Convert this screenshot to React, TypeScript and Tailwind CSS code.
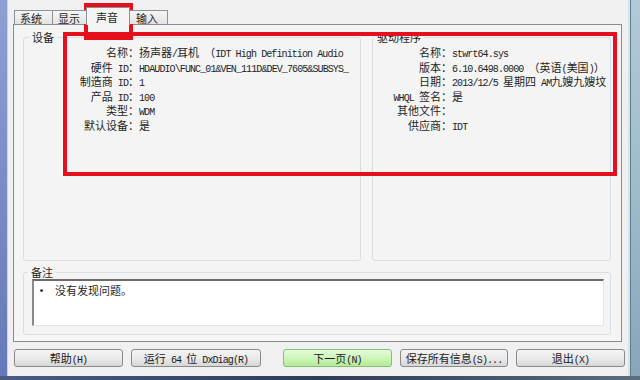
import React from "react";

const cjk = "font-['Noto_Sans_CJK_SC','Liberation_Sans',sans-serif]";

// Latin runs look like SimSun's half-width glyphs: narrow mono
function T({ s }: { s: string }) {
  const parts = s.split(/([\x20-\x7e]+)/);
  return (
    <>
      {parts.map((p, i) =>
        /^[\x20-\x7e]+$/.test(p) ? (
          <span key={i} className="font-['Liberation_Mono',monospace] text-[10px] tracking-[-0.9px]">
            {p}
          </span>
        ) : (
          <span key={i}>{p}</span>
        )
      )}
    </>
  );
}

const device = [
  ["名称：", "扬声器/耳机 （IDT High Definition Audio"],
  ["硬件 ID：", "HDAUDIO\\FUNC_01&VEN_111D&DEV_7605&SUBSYS_"],
  ["制造商 ID：", "1"],
  ["产品 ID：", "100"],
  ["类型：", "WDM"],
  ["默认设备：", "是"],
];

const driver = [
  ["名称：", "stwrt64.sys"],
  ["版本：", "6.10.6498.0000 （英语(美国)）"],
  ["日期：", "2013/12/5 星期四 AM九嫂九嫂坟"],
  ["WHQL 签名：", "是"],
  ["其他文件：", ""],
  ["供应商：", "IDT"],
];

function Rows({ rows, labelW }: { rows: string[][]; labelW: string }) {
  return (
    <div className="flex flex-col pt-[1px]">
      {rows.map(([k, v]) => (
        <div key={k} className="flex leading-[14.6px] h-[14.6px] whitespace-nowrap">
          <div className={`${labelW} shrink-0 text-right`}>
            <T s={k} />
          </div>
          <div className="flex-1 overflow-hidden">
            <T s={v} />
          </div>
        </div>
      ))}
    </div>
  );
}

function Btn({ label, w, green }: { label: string; w: string; green?: boolean }) {
  return (
    <button
      className={`${w} h-[18px] rounded-[3px] border text-[11px] leading-[16px] text-[#1b1b1b] ${
        green
          ? "border-[#86bd7a] bg-gradient-to-b from-[#e6fbdb] via-[#cdf5b8] to-[#b3eb96]"
          : "border-[#8a8a8a] bg-gradient-to-b from-[#f4f4f4] via-[#eaeaea] to-[#d7d7d7]"
      }`}
    >
      <T s={label} />
    </button>
  );
}

export default function App() {
  return (
    <div className={`w-[640px] h-[380px] relative overflow-hidden flex flex-col text-[11px] text-[#1e1e1e] ${cjk}`}>
      <div className="flex flex-1">
        <div className="w-[8px] bg-gradient-to-b from-[#8e9fd3] via-[#7a8cc8] to-[#6579b8] border-r border-[#c9d2ea]" />

        <div className="w-[620px] bg-[#f0f0f0] flex flex-col pt-[7px]">
          {/* tabs */}
          <div className="flex h-[17px] pl-[6px] relative z-10">
            <div className="w-[39px] h-[14px] mt-[3px] pl-[5px] leading-[14px] border border-b-0 border-[#8e9099] bg-gradient-to-b from-[#f6f6f6] to-[#e2e2e2]">
              系统
            </div>
            <div className="w-[35px] h-[14px] mt-[3px] pl-[5px] leading-[14px] border border-l-0 border-b-0 border-[#8e9099] bg-gradient-to-b from-[#f6f6f6] to-[#e2e2e2]">
              显示
            </div>
            <div className="w-[44px] h-[18px] -ml-[2px] pl-[9px] pt-[2px] leading-[14px] border border-b-0 border-[#8e9099] bg-[#f4f4f4]">
              声音
            </div>
            <div className="w-[38px] h-[14px] mt-[3px] pl-[6px] leading-[14px] border border-l-0 border-b-0 border-[#8e9099] bg-gradient-to-b from-[#f6f6f6] to-[#e2e2e2]">
              输入
            </div>
          </div>

          {/* tab panel */}
          <div className="ml-[5px] mr-[6px] h-[318px] border border-[#898c95] bg-[#f4f4f4] pl-[9px] pr-[10px] pt-[5px]">
            <div className="flex gap-[11px]">
              <fieldset className="w-[338px] h-[231px] border border-[#d5dfe5] rounded-[3px] pr-[10px]">
                <legend className="ml-[5px] px-[3px] leading-[14px]">设备</legend>
                <Rows rows={device} labelW="w-[115px]" />
              </fieldset>
              <fieldset className="w-[239px] h-[231px] border border-[#d5dfe5] rounded-[3px]">
                <legend className="ml-[1px] px-[3px] leading-[14px]">驱动程序</legend>
                <Rows rows={driver} labelW="w-[79px]" />
              </fieldset>
            </div>

            <fieldset className="mt-[4px] h-[70px] border border-[#d5dfe5] rounded-[3px] pl-[8px] pr-[6px]">
              <legend className="-ml-[4px] px-[3px] leading-[14px]">备注</legend>
              <div className="h-[47px] bg-white border-t-2 border-l-2 border-t-[#6b6b6b] border-l-[#8a8a8a] border-r border-b border-r-[#e6e6e6] border-b-[#e6e6e6] flex pl-[2px] pt-[2px] leading-[14px]">
                <span className="w-[19px] font-bold">•</span>
                <span>没有发现问题。</span>
              </div>
            </fieldset>
          </div>

          {/* buttons */}
          <div className="flex pl-[6px] mt-[7px]">
            <Btn label="帮助(H)" w="w-[109px]" />
            <div className="ml-[8px]">
              <Btn label="运行 64 位 DxDiag(R)" w="w-[130px]" />
            </div>
            <div className="ml-[22px]">
              <Btn label="下一页(N)" w="w-[109px]" green />
            </div>
            <div className="ml-[8px]">
              <Btn label="保存所有信息(S)..." w="w-[108px]" />
            </div>
            <div className="ml-[8px]">
              <Btn label="退出(X)" w="w-[109px]" />
            </div>
          </div>
        </div>

        <div className="flex-1 flex">
          <div className="w-[2px] bg-[#d9e3ea]" />
          <div className="w-[1px] bg-[#5f7d91]" />
          <div className="flex-1 bg-gradient-to-b from-[#b2c9d6] via-[#9fbccb] to-[#87a6b8]" />
        </div>
      </div>
      <div className="h-[4px] bg-gradient-to-r from-[#4a5c86] via-[#2f3c55] to-[#5c6d7e]" />

      {/* red annotation boxes */}
      <div className="absolute left-[84px] top-[3px] w-[49px] h-[37px] border-[4px] border-[#e5101c]" />
      <div className="absolute left-[63px] top-[32px] w-[554px] h-[144px] border-[4px] border-[#e5101c]" />
    </div>
  );
}
